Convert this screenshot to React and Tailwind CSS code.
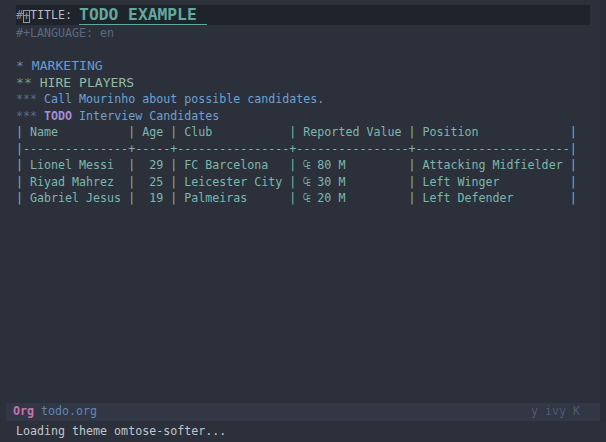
import React from "react";

const mono = { fontFamily: '"DejaVu Sans Mono", "Liberation Mono", monospace' };

const table = [
  "| Name          | Age | Club           | Reported Value | Position             |",
  "|---------------+-----+----------------+----------------+----------------------|",
  "| Lionel Messi  |  29 | FC Barcelona   | ₠ 80 M         | Attacking Midfielder |",
  "| Riyad Mahrez  |  25 | Leicester City | ₠ 30 M         | Left Winger          |",
  "| Gabriel Jesus |  19 | Palmeiras      | ₠ 20 M         | Left Defender        |",
];

function Line({ children, className = "" }) {
  return (
    <div className={"h-[16.5px] leading-[16.5px] whitespace-pre " + className}>
      {children}
    </div>
  );
}

export default function App() {
  return (
    <div
      className="w-[606px] h-[442px] bg-[#2b303b] flex flex-col text-[11.65px] overflow-hidden"
      style={mono}
    >
      <div className="flex flex-1">
        <div className="w-[6px] bg-[#2b303b]" />
        <div className="flex-1 flex flex-col">
          <div className="flex-1 pt-[5px]">
            {/* title line with current-line highlight */}
            <div className="h-[20px] bg-[#1f232c] ml-[10px] mr-[10px] flex items-end whitespace-pre">
              <span className="text-[#8f96a3] leading-[18px] pb-[1px]">#</span>
              <span className="text-[#8f96a3] w-[7px] h-[13px] mb-[2px] border border-[#8f96a3] flex items-center justify-center leading-[11px]">+</span>
              <span className="text-[#b9bdc5] leading-[18px] pb-[1px]">TITLE: </span>
              <span className="text-[#62a99b] font-bold text-[16.3px] leading-[19px] border-b border-[#62a99b] pr-[10px]">
                TODO EXAMPLE
              </span>
            </div>
            <div className="pl-[10px]">
              <Line className="text-[#5a6a82]">#+LANGUAGE: en</Line>
              <Line> </Line>
              <Line className="text-[13.1px]">
                <span className="text-[#5f8bb8]">* </span>
                <span className="text-[#6b9bcc]">MARKETING</span>
              </Line>
              <Line className="text-[13.1px]">
                <span className="text-[#6a9a84]">** </span>
                <span className="text-[#8bbf9f]">HIRE PLAYERS</span>
              </Line>
              <Line>
                <span className="text-[#5a6a86]">*** </span>
                <span className="text-[#6ea2d2]">Call Mourinho about possible candidates.</span>
              </Line>
              <Line>
                <span className="text-[#5a6a86]">*** </span>
                <span className="text-[#a58fd8] font-bold">TODO</span>
                <span className="text-[#6ea2d2]"> Interview Candidates</span>
              </Line>
              {table.map((row, i) => (
                <Line key={i} className="text-[#7db8ad]">
                  {row}
                </Line>
              ))}
            </div>
          </div>
          {/* mode line */}
          <div className="h-[18px] bg-[#313745] flex items-center justify-between pl-[7px] pr-[20px] whitespace-pre">
            <div>
              <span className="text-[#c774ad] font-bold">Org</span>
              <span className="text-[#6287b6]"> todo.org</span>
            </div>
            <div className="text-[#4f5b73]">y ivy K</div>
          </div>
        </div>
        <div className="w-[6px] bg-[#282d37]" />
      </div>
      {/* echo area */}
      <div className="h-[21px] flex items-center pl-[16px] text-[#c2c6cc] whitespace-pre">
        Loading theme omtose-softer...
      </div>
    </div>
  );
}
